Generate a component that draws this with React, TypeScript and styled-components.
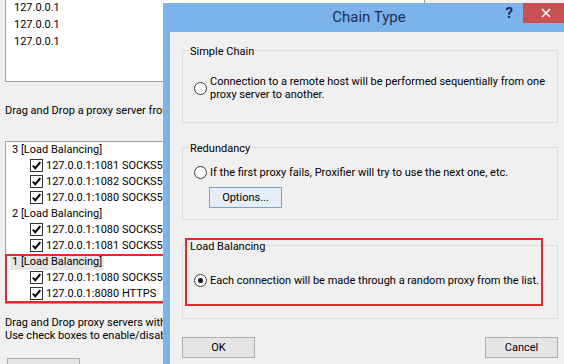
import styled, { createGlobalStyle } from 'styled-components'

const GlobalStyle = createGlobalStyle`
    html, body {
        margin: 0;
        padding: 0;
    }
    body {
        background: #f0f0f0;
        font-family: Roboto, 'Noto Sans', 'Segoe UI', sans-serif;
        font-size: 11px;
        color: #000;
    }
`

const Screen = styled.div`
    position: relative;
    width: 564px;
    height: 364px;
    overflow: hidden;
    background: #f0f0f0;
`

// ---- proxifier main window (behind the dialog) ----
const BackWindow = styled.div`
    display: flex;
    flex-direction: column;
    align-items: flex-start;
    padding-left: 5px;
`

const ListBox = styled.div<{ $height: number; $top?: number }>`
    width: 420px;
    height: ${p => p.$height}px;
    margin-top: ${p => p.$top ?? 0}px;
    box-sizing: border-box;
    background: #fff;
    border: 1px solid #a0a0a0;
    display: flex;
    flex-direction: column;
`

const HostRow = styled.div`
    height: 17px;
    line-height: 17px;
    padding-left: 8px;
    &:first-child {
        margin-top: 1px;
    }
`

const Hint = styled.div<{ $top: number }>`
    margin-top: ${p => p.$top}px;
    line-height: 13.5px;
    white-space: nowrap;
`

const TreeRow = styled.div<{ $item?: boolean }>`
    height: 16px;
    display: flex;
    align-items: center;
    gap: 3px;
    padding-left: ${p => (p.$item ? 24 : 4)}px;
    white-space: nowrap;
`

const RowLabel = styled.span<{ $selected?: boolean }>`
    padding: 0 2px;
    line-height: 16px;
    background: ${p => (p.$selected ? '#e6e6e6' : 'transparent')};
`

const CheckBox = styled.span`
    width: 13px;
    height: 13px;
    box-sizing: border-box;
    border: 1px solid #333;
    background: #fff;
    display: flex;
    align-items: center;
    justify-content: center;
    flex: none;
`

// red annotation frame drawn over the screenshot
const Marked = styled.div`
    width: 160px;
    margin-left: -1px;
    padding-left: 1px;
    height: 50px;
    box-sizing: border-box;
    outline: 2px solid #e8262c;
    outline-offset: -2px;
`

const WinButton = styled.button<{ $focused?: boolean }>`
    width: 73px;
    height: 21px;
    box-sizing: border-box;
    border: 1px solid ${p => (p.$focused ? '#6ea5dc' : '#adadad')};
    background: ${p => (p.$focused ? '#e5edf6' : '#e5e5e5')};
    font-family: inherit;
    font-size: 11px;
    color: #000;
    padding: 0;
    cursor: default;
`

const BottomButton = styled(WinButton)`
    margin: 15px 0 0 2px;
`

// ---- chain type dialog ----
const Dialog = styled.div`
    position: absolute;
    left: 163px;
    top: 3px;
    width: 412px;
    height: 380px;
    background: #7bb3ea;
    padding: 0 7px;
    box-sizing: border-box;
    display: flex;
    flex-direction: column;
`

const TitleBar = styled.div`
    height: 29px;
    flex: none;
    display: grid;
    grid-template-columns: 1fr auto 1fr;
    align-items: start;
`

const Title = styled.div`
    grid-column: 2;
    font-size: 15px;
    line-height: 29px;
    color: #1c2f57;
`

const Controls = styled.div`
    grid-column: 3;
    justify-self: end;
    display: flex;
    align-items: flex-start;
    gap: 10px;
`

const HelpMark = styled.span`
    font-size: 15px;
    font-weight: 700;
    line-height: 20px;
    color: #1b2a6b;
`

const CloseButton = styled.div`
    width: 45px;
    height: 20px;
    background: #c75050;
    display: flex;
    align-items: center;
    justify-content: center;
`

const Client = styled.div`
    flex: 1;
    background: #f0f0f0;
    padding: 18px 10px 0 12px;
    display: flex;
    flex-direction: column;
`

const GroupBox = styled.div<{ $height: number; $top?: number }>`
    position: relative;
    height: ${p => p.$height}px;
    margin-top: ${p => p.$top ?? 0}px;
    box-sizing: border-box;
    border: 1px solid #dcdcdc;
    display: flex;
    flex-direction: column;
    align-items: flex-start;
`

const Caption = styled.span`
    margin: -6px 0 0 6px;
    padding: 0 1px;
    line-height: 14px;
    background: #f0f0f0;
`

const Option = styled.div<{ $top: number }>`
    display: flex;
    align-items: center;
    gap: 3px;
    margin-top: ${p => p.$top}px;
    padding-left: 11px;
    line-height: 13px;
    white-space: nowrap;
`

const Radio = styled.span<{ $checked?: boolean }>`
    width: 13px;
    height: 13px;
    box-sizing: border-box;
    border-radius: 50%;
    border: 1px solid #3a3a3a;
    background: #fff;
    display: flex;
    align-items: center;
    justify-content: center;
    flex: none;
    &::after {
        content: '';
        width: 5px;
        height: 5px;
        border-radius: 50%;
        background: ${p => (p.$checked ? '#1a1028' : 'transparent')};
    }
`

const OptionsButton = styled(WinButton)`
    margin: 8px 0 0 26px;
    height: 21px;
`

const AnnotationFrame = styled.div`
    position: absolute;
    left: 2px;
    top: -8px;
    width: 358px;
    height: 68px;
    box-sizing: border-box;
    border: 2px solid #e8262c;
    pointer-events: none;
`

const ButtonRow = styled.div`
    display: flex;
    justify-content: space-between;
    margin-top: 18px;
`

function Check() {
    return (
        <CheckBox>
            <svg width='11' height='11' viewBox='0 0 11 11'>
                <path d='M1.8 5.6 L4.3 8.2 L9.3 2.2' fill='none' stroke='#000' strokeWidth='2' />
            </svg>
        </CheckBox>
    )
}

const chains = [
    { name: '3 [Load Balancing]', items: ['127.0.0.1:1081 SOCKS5', '127.0.0.1:1082 SOCKS5', '127.0.0.1:1080 SOCKS5'] },
    { name: '2 [Load Balancing]', items: ['127.0.0.1:1080 SOCKS5', '127.0.0.1:1081 SOCKS5'] },
]

export default function App() {
    return (
        <>
            <GlobalStyle />
            <Screen>
                <BackWindow>
                    <ListBox $height={85} $top={-3}>
                        <HostRow>127.0.0.1</HostRow>
                        <HostRow>127.0.0.1</HostRow>
                        <HostRow>127.0.0.1</HostRow>
                    </ListBox>
                    <Hint $top={22}>Drag and Drop a proxy server from the list below to add it to the chain</Hint>
                    <ListBox $height={163} $top={23}>
                        {chains.map(c => (
                            <div key={c.name}>
                                <TreeRow>
                                    <RowLabel>{c.name}</RowLabel>
                                </TreeRow>
                                {c.items.map(it => (
                                    <TreeRow $item key={it}>
                                        <Check />
                                        <span>{it}</span>
                                    </TreeRow>
                                ))}
                            </div>
                        ))}
                        <Marked>
                            <TreeRow>
                                <RowLabel $selected>1 [Load Balancing]</RowLabel>
                            </TreeRow>
                            <TreeRow $item>
                                <Check />
                                <span>127.0.0.1:1080 SOCKS5</span>
                            </TreeRow>
                            <TreeRow $item>
                                <Check />
                                <span>127.0.0.1:8080 HTTPS</span>
                            </TreeRow>
                        </Marked>
                    </ListBox>
                    <Hint $top={12}>
                        Drag and Drop proxy servers within the chain to change the order.
                        <br />
                        Use check boxes to enable/disable proxies in the chain.
                    </Hint>
                    {/* label sits below the visible edge */}
                    <BottomButton aria-label='Add' />
                </BackWindow>

                <Dialog>
                    <TitleBar>
                        <Title>Chain Type</Title>
                        <Controls>
                            <HelpMark>?</HelpMark>
                            <CloseButton>
                                <svg width='10' height='10' viewBox='0 0 10 10'>
                                    <path d='M1 1 L9 9 M9 1 L1 9' stroke='#fff' strokeWidth='1.6' />
                                </svg>
                            </CloseButton>
                        </Controls>
                    </TitleBar>
                    <Client>
                        <GroupBox $height={73}>
                            <Caption>Simple Chain</Caption>
                            <Option $top={16}>
                                <Radio />
                                <span>
                                    Connection to a remote host will be performed sequentially from one
                                    <br />
                                    proxy server to another.
                                </span>
                            </Option>
                        </GroupBox>
                        <GroupBox $height={73} $top={24}>
                            <Caption>Redundancy</Caption>
                            <Option $top={10}>
                                <Radio />
                                <span>If the first proxy fails, Proxifier will try to use the next one, etc.</span>
                            </Option>
                            <OptionsButton $focused>Options...</OptionsButton>
                        </GroupBox>
                        <GroupBox $height={74} $top={25}>
                            <AnnotationFrame />
                            <Caption>Load Balancing</Caption>
                            <Option $top={20}>
                                <Radio $checked />
                                <span>Each connection will be made through a random proxy from the list.</span>
                            </Option>
                        </GroupBox>
                        <ButtonRow>
                            <WinButton>OK</WinButton>
                            <WinButton>Cancel</WinButton>
                        </ButtonRow>
                    </Client>
                </Dialog>
            </Screen>
        </>
    )
}
